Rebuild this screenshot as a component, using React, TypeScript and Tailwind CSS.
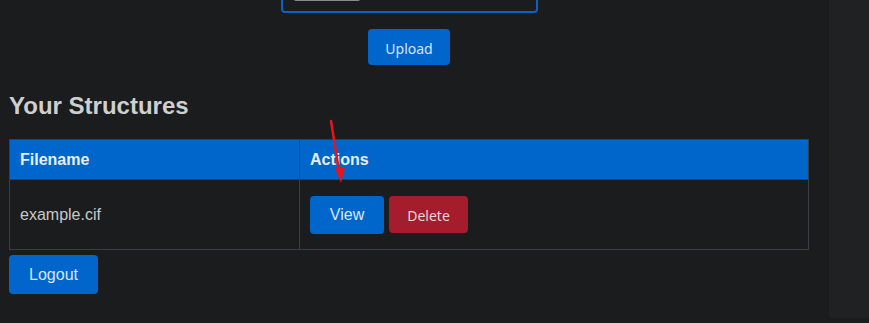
import React from 'react';

const files = ['example.cif'];

export default function App() {
  return (
    <div className="relative flex h-[323px] w-[869px] overflow-hidden bg-[#1b1c1e] font-['Liberation_Sans',Arial,sans-serif]">
      <main className="w-[829px] shrink-0 px-[9px]">
        {/* upload form */}
        <div className="flex w-[800px] flex-col items-center">
          <div className="-mt-[31px] flex h-[44px] w-[257px] items-end rounded-[4px] border-2 border-[#0a62c4] px-[10px] pb-[10px]">
            <div className="h-[20px] w-[68px] rounded-[3px] border border-[#8a8a90] bg-[#2a2b2e]" />
          </div>
          <button className="mt-[16px] h-[36px] w-[82px] rounded-[4px] bg-[#0066cc] pt-[3px] font-['Noto_Sans',sans-serif] text-[14px] text-[#d8e4f2]">
            Upload
          </button>
        </div>

        <h2 className="mt-[26px] text-[24px] font-bold leading-[29px] text-[#cfcfcf]">Your Structures</h2>

        <table className="mt-[19px] w-[800px] border-collapse text-[16px]">
          <thead>
            <tr className="h-[40px] bg-[#0066cc] text-left text-[#e8eef6]">
              <th className="w-[290px] border border-[#3d3e41] px-[10px] font-bold">Filename</th>
              <th className="border border-[#3d3e41] px-[10px] font-bold">Actions</th>
            </tr>
          </thead>
          <tbody>
            {files.map((f) => (
              <tr key={f} className="h-[70px] text-[#c9c9c9]">
                <td className="border border-[#3d3e41] px-[10px]">{f}</td>
                <td className="border border-[#3d3e41] px-[10px]">
                  <div className="flex items-center gap-[5px]">
                    <button className="h-[38px] w-[74px] rounded-[4px] bg-[#0066cc] text-[16px] text-[#dde6f0]">View</button>
                    <button className="h-[37px] w-[79px] rounded-[4px] bg-[#a51d2d] pt-[2px] font-['Noto_Sans',sans-serif] text-[14px] text-[#e6d4d6]">
                      Delete
                    </button>
                  </div>
                </td>
              </tr>
            ))}
          </tbody>
        </table>

        <button className="mt-[5px] h-[39px] w-[89px] rounded-[4px] bg-[#0066cc] text-[16px] text-[#dde6f0]">Logout</button>
      </main>

      <aside className="h-[318px] flex-1 rounded-bl-[4px] bg-[#202123]" />

      {/* annotation arrow */}
      <svg className="absolute left-[322px] top-[115px]" width="30" height="75" viewBox="0 0 30 75">
        <line x1="9" y1="6" x2="17" y2="56" stroke="#e8141c" strokeWidth="2.5" strokeLinecap="round" />
        <polygon points="13,53 23,52 19,68" fill="#e8141c" />
      </svg>
    </div>
  );
}
